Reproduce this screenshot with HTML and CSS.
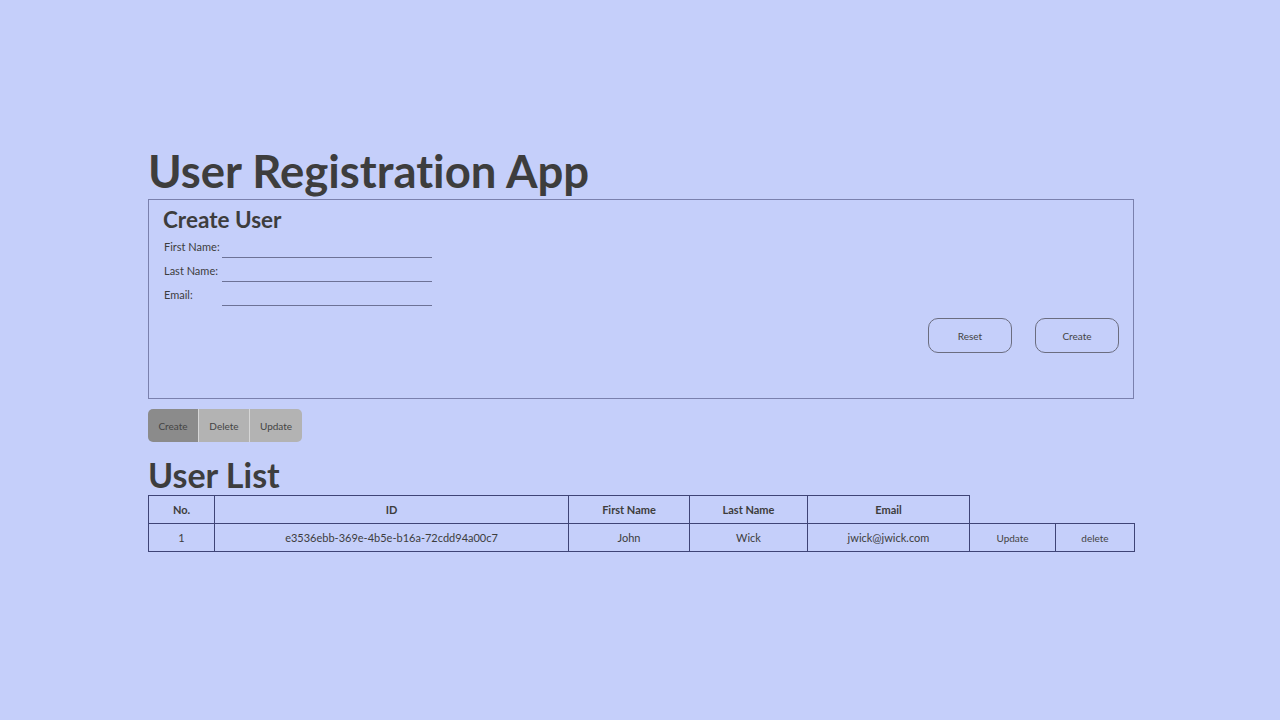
FILE: index.html
```html
<!DOCTYPE html>
<html lang="en">
<head>
<meta charset="utf-8">
<title>User Registration App</title>
<link rel="stylesheet" href="styles.css">
</head>
<body>
<main class="app">
  <h1 class="app-title">User Registration App</h1>
  <section class="create-box">
    <h2 class="create-title">Create User</h2>
    <div class="form-row"><label class="form-label">First Name:</label><input class="form-input" type="text"></div>
    <div class="form-row"><label class="form-label">Last Name:</label><input class="form-input" type="text"></div>
    <div class="form-row"><label class="form-label">Email:</label><input class="form-input" type="text"></div>
    <div class="form-actions">
      <button class="action-btn">Reset</button>
      <button class="action-btn">Create</button>
    </div>
  </section>
  <div class="tabs">
    <button class="tab tab-active">Create</button>
    <button class="tab">Delete</button>
    <button class="tab">Update</button>
  </div>
  <h2 class="list-title">User List</h2>
  <table class="user-table">
    <colgroup>
      <col class="c-no"><col class="c-id"><col class="c-first"><col class="c-last"><col class="c-email"><col class="c-upd"><col class="c-del">
    </colgroup>
    <thead>
      <tr><th>No.</th><th>ID</th><th>First Name</th><th>Last Name</th><th>Email</th></tr>
    </thead>
    <tbody>
      <tr>
        <td>1</td><td>e3536ebb-369e-4b5e-b16a-72cdd94a00c7</td><td>John</td><td>Wick</td><td>jwick@jwick.com</td>
        <td class="btn-cell"><button class="row-btn">Update</button></td>
        <td class="btn-cell"><button class="row-btn">delete</button></td>
      </tr>
    </tbody>
  </table>
</main>
</body>
</html>
```
FILE: styles.css
```css
* { box-sizing: border-box; }
html, body { margin: 0; padding: 0; }
body {
  background: #c5cffa;
  font-family: Lato, "Open Sans", sans-serif;
  font-variant-ligatures: none;
  color: #3d3d3d;
  min-height: 720px;
}
.app {
  width: 986px;
  margin-left: 148px;
  padding-top: 143px;
}
.app-title {
  margin: 0 0 1px;
  font-size: 45.5px;
  font-weight: 700;
  line-height: 55px;
}
.create-box {
  height: 200px;
  border: 1px solid #7a80ad;
  padding: 5px 14px 0 14px;
}
.create-title {
  margin: 0 0 5px;
  font-size: 22.5px;
  font-weight: 700;
  line-height: 29px;
}
.form-row {
  display: flex;
  align-items: flex-start;
  height: 24px;
  padding-left: 1px;
}
.form-label {
  flex: 0 0 58px;
  width: 58px;
  font-size: 11px;
  line-height: 14px;
  padding-top: 1px;
  white-space: nowrap;
}
.form-input {
  flex: 0 0 210px;
  width: 210px;
  height: 19px;
  border: none;
  border-bottom: 1px solid #6d7296;
  background: transparent;
  padding: 0;
  outline: none;
  font-family: inherit;
}
.form-actions {
  display: flex;
  justify-content: flex-end;
  gap: 23px;
  margin-top: 7px;
}
.action-btn {
  width: 84px;
  height: 35px;
  border: 1px solid #6b6d80;
  border-radius: 10px;
  background: transparent;
  font-family: inherit;
  font-size: 10px;
  color: #444;
  padding: 0;
}
.tabs {
  display: inline-flex;
  margin-top: 10px;
  border-radius: 5px;
  overflow: hidden;
}
.tab {
  height: 33px;
  border: none;
  border-left: 1px solid #d6d6d6;
  background: #b3b3b3;
  font-family: inherit;
  font-size: 10px;
  color: #444;
  padding: 0;
  width: 51px;
}
.tab:first-child { border-left: none; width: 50px; }
.tab:last-child { width: 53px; }
.tab-active { background: #8b8b8b; }
.list-title {
  margin: 12px 0 0;
  font-size: 34px;
  font-weight: 700;
  line-height: 41px;
}
.user-table {
  width: 986px;
  border-collapse: collapse;
  table-layout: fixed;
  font-size: 11px;
}
.c-no { width: 66px; }
.c-id { width: 354px; }
.c-first { width: 121px; }
.c-last { width: 118px; }
.c-email { width: 162px; }
.c-upd { width: 86px; }
.c-del { width: 79px; }
.user-table th, .user-table td {
  border: 1px solid #3f4476;
  height: 28px;
  padding: 0;
  text-align: center;
  vertical-align: middle;
}
.user-table th { font-weight: 700; }
.row-btn {
  border: none;
  background: transparent;
  font-family: inherit;
  font-size: 10px;
  color: #444;
  padding: 0;
}
```
